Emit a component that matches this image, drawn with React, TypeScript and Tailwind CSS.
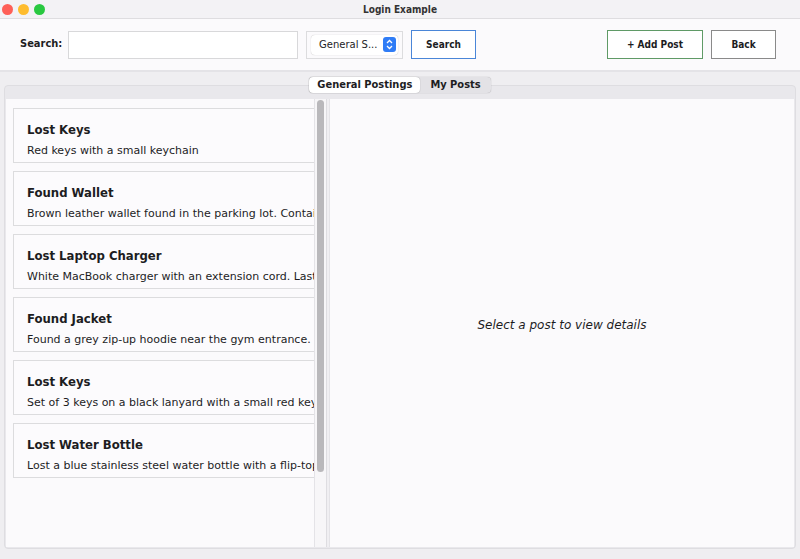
import React from 'react';

const posts = [
    { title: 'Lost Keys', desc: 'Red keys with a small keychain' },
    { title: 'Found Wallet', desc: 'Brown leather wallet found in the parking lot. Contains ID and cards.' },
    { title: 'Lost Laptop Charger', desc: 'White MacBook charger with an extension cord. Last seen in library.' },
    { title: 'Found Jacket', desc: 'Found a grey zip-up hoodie near the gym entrance. Size M.' },
    { title: 'Lost Keys', desc: 'Set of 3 keys on a black lanyard with a small red keychain.' },
    { title: 'Lost Water Bottle', desc: 'Lost a blue stainless steel water bottle with a flip-top lid.' },
];

const font = { fontFamily: '"DejaVu Sans", "Liberation Sans", sans-serif' };
const bold = { fontFamily: '"DejaVu Sans Condensed", "DejaVu Sans", "Liberation Sans", sans-serif' };

const App: React.FC = () => {
    return (
        <div className="w-[800px] h-[559px] bg-[#efeef1] flex flex-col overflow-hidden text-[#1d1d1f]" style={font}>
            {/* Title bar */}
            <div className="h-[19px] flex items-center relative bg-[#f3f2f5] border-b border-[#dedde0]">
                <div className="flex gap-[5px] pl-[2px]">
                    <span className="w-[11px] h-[11px] rounded-full bg-[#fe5f57]" />
                    <span className="w-[11px] h-[11px] rounded-full bg-[#febc2e]" />
                    <span className="w-[11px] h-[11px] rounded-full bg-[#28c840]" />
                </div>
                <div className="absolute inset-0 flex items-center justify-center text-[10px] font-bold text-[#333]" style={bold}>Login Example</div>
            </div>

            {/* Toolbar */}
            <div className="h-[53px] flex items-center bg-[#fbfafc] border-b-2 border-[#e4e3e7] pl-[20px] pr-[24px]">
                <span className="w-[48px] text-[11px] font-bold" style={bold}>Search:</span>
                <div className="w-[230px] h-[28px] bg-white border border-[#d8d8da]" />
                <div className="ml-[8px] w-[97px] h-[28px] border border-[#dcdcde] bg-[#fbfafc] flex items-center px-[4px]">
                    <div className="flex-1 h-[20px] bg-white rounded-[4px] shadow-[0_0_1px_rgba(0,0,0,0.3)] flex items-center justify-between pl-[8px] pr-[2px]">
                        <span className="text-[10px] whitespace-nowrap">General S...</span>
                        <span className="w-[13px] h-[15px] rounded-[3px] bg-[#2f7cf6] flex items-center justify-center">
                            <svg width="7" height="11" viewBox="0 0 7 11" fill="none" stroke="white" strokeWidth="1.3">
                                <path d="M1 4 L3.5 1.5 L6 4" />
                                <path d="M1 7 L3.5 9.5 L6 7" />
                            </svg>
                        </span>
                    </div>
                </div>
                <button className="ml-[8px] w-[65px] h-[29px] border border-[#4a86d8] bg-white text-[10px] font-bold" style={bold}>Search</button>
                <div className="flex-1" />
                <button className="w-[96px] h-[29px] border border-[#5f9a66] bg-white text-[10px] font-bold" style={bold}>+ Add Post</button>
                <button className="ml-[8px] w-[65px] h-[29px] border border-[#8a8a8a] bg-white text-[10px] font-bold" style={bold}>Back</button>
            </div>

            {/* Tabs + content */}
            <div className="flex-1 flex flex-col px-[4px] pt-[5px] pb-[10px]">
                <div className="flex justify-center relative z-10 h-[16px]">
                    <div className="flex rounded-[4px] bg-[#e3e2e6] shadow-[0_0_1px_rgba(0,0,0,0.35)] text-[11px] font-bold" style={bold}>
                        <span className="px-[8px] bg-white rounded-[4px] shadow-[0_0_1px_rgba(0,0,0,0.4)] leading-[16px]">General Postings</span>
                        <span className="px-[10px] leading-[16px]">My Posts</span>
                    </div>
                </div>
                <div className="-mt-[8px] flex-1 flex flex-col bg-[#e9e8ec] rounded-[4px] border border-[#dedde1] pt-[13px] px-[1px] pb-[1px]">
                    <div className="flex-1 flex bg-[#fbfafc]">
                        {/* List */}
                        <div className="w-[321px] flex overflow-hidden border-r border-[#dedde1]">
                            <div className="flex-1 overflow-hidden pl-[7px] pt-[9px] flex flex-col gap-[8px]">
                                {posts.map((p, i) => (
                                    <div key={i} className="h-[55px] shrink-0 border border-[#dcdcde] border-r-0 bg-[#fcfbfd] pl-[13px] pt-[13px] whitespace-nowrap overflow-hidden">
                                        <div className="text-[13px] font-bold leading-[16px]" style={bold}>{p.title}</div>
                                        <div className="text-[11px] leading-[14px] mt-[6px]">{p.desc}</div>
                                    </div>
                                ))}
                            </div>
                            <div className="w-[12px] border-l border-[#e4e3e7] bg-[#f7f6f8] pt-[1px] flex justify-center">
                                <div className="w-[7px] h-[372px] rounded-full bg-[#b9b8bb]" />
                            </div>
                        </div>
                        <div className="w-[2px] bg-[#f0eff2]" />
                        {/* Details */}
                        <div className="flex-1 flex items-center justify-center pt-[3px] border-l border-[#e4e3e7]">
                            <span className="text-[12px] italic">Select a post to view details</span>
                        </div>
                    </div>
                </div>
            </div>
        </div>
    );
};

export default App;
